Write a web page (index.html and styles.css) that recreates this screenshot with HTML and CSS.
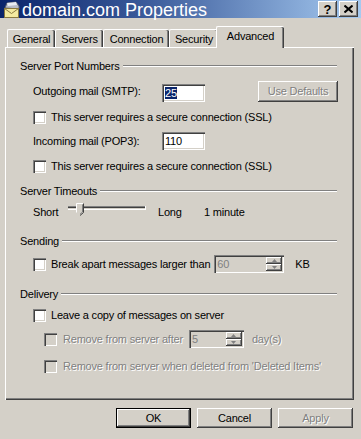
FILE: index.html
```html
<!DOCTYPE html>
<html>
<head>
<meta charset="utf-8">
<link rel="stylesheet" href="styles.css">
</head>
<body>
<div class="window">
  <div class="titlebar">
    <svg class="appicon" width="19" height="17" viewBox="0 0 19 17">
      <path d="M3 7 L5 2 L14 1 L17 5 L17 8 Z" fill="#b8bcc8" stroke="#5a6070" stroke-width="1"/>
      <path d="M5 2 L14 1 L15 4 L6 5 Z" fill="#e8ecf4"/>
      <rect x="2.5" y="7.5" width="14" height="9" fill="#f4eaa0" stroke="#8a7a40"/>
      <path d="M2.5 7.5 L9.5 12.5 L16.5 7.5" fill="none" stroke="#8a7a40"/>
    </svg>
    <span class="title">domain.com Properties</span>
    <div class="tb-buttons">
      <span class="tb-btn tb-help">?</span>
      <span class="tb-btn">
        <svg width="9" height="8" viewBox="0 0 9 8"><path d="M0.5 0.5 L8.5 7.5 M8.5 0.5 L0.5 7.5" stroke="#000" stroke-width="2"/></svg>
      </span>
    </div>
  </div>

  <div class="tabs">
    <div class="tab tab-general">General</div>
    <div class="tab tab-servers">Servers</div>
    <div class="tab tab-connection">Connection</div>
    <div class="tab tab-security">Security</div>
    <div class="tab tab-advanced selected">Advanced</div>
  </div>

  <div class="panel">
    <div class="group-head"><span>Server Port Numbers</span><i class="etch"></i></div>

    <div class="row row-outgoing">
      <span class="lbl-port">Outgoing mail (SMTP):</span>
      <span class="field"><span class="sel">25</span></span>
      <span class="btn btn-defaults disabled">Use Defaults</span>
    </div>
    <div class="row row-cb1">
      <span class="cb"></span><span>This server requires a secure connection (SSL)</span>
    </div>
    <div class="row row-incoming">
      <span class="lbl-port">Incoming mail (POP3):</span>
      <span class="field">110</span>
    </div>
    <div class="row row-cb2">
      <span class="cb"></span><span>This server requires a secure connection (SSL)</span>
    </div>

    <div class="group-head head-timeouts"><span>Server Timeouts</span><i class="etch"></i></div>
    <div class="row row-slider">
      <span class="lbl-short">Short</span>
      <svg class="slider" width="80" height="16" viewBox="0 0 80 16">
        <rect x="0" y="3" width="78" height="1" fill="#808080"/>
        <rect x="0" y="4" width="77" height="1" fill="#404040"/>
        <rect x="0" y="6" width="78" height="1" fill="#ffffff"/>
        <rect x="77" y="3" width="1" height="4" fill="#ffffff"/>
        <path d="M8.5 0.5 H15.5 V9.5 L12 12.5 L8.5 9.5 Z" fill="#d4d0c8"/>
        <path d="M8.5 9.5 V0.5 H15.5" fill="none" stroke="#ffffff"/>
        <path d="M15.5 0.5 V9.5 L12 12.5" fill="none" stroke="#404040"/>
        <path d="M14.5 1.5 V9 L12 11.2" fill="none" stroke="#808080"/>
      </svg>
      <span class="lbl-long">Long</span>
      <span>1 minute</span>
    </div>

    <div class="group-head head-sending"><span>Sending</span><i class="etch"></i></div>
    <div class="row row-sending">
      <span class="cb"></span><span>Break apart messages larger than</span>
      <span class="spin spin-kb">
        <span class="spin-val">60</span>
        <span class="spin-btns">
          <span class="spin-btn"><svg width="5" height="3" viewBox="0 0 5 3"><path d="M2.5 0 L5 3 H0 Z" fill="#808080"/></svg></span>
          <span class="spin-btn"><svg width="5" height="3" viewBox="0 0 5 3"><path d="M0 0 H5 L2.5 3 Z" fill="#808080"/></svg></span>
        </span>
      </span>
      <span class="lbl-kb">KB</span>
    </div>

    <div class="group-head head-delivery"><span>Delivery</span><i class="etch"></i></div>
    <div class="row row-leave">
      <span class="cb"></span><span>Leave a copy of messages on server</span>
    </div>
    <div class="row row-after">
      <span class="cb disabled-cb"></span><span class="dis">Remove from server after</span>
      <span class="spin spin-days">
        <span class="spin-val">5</span>
        <span class="spin-btns">
          <span class="spin-btn"><svg width="5" height="3" viewBox="0 0 5 3"><path d="M2.5 0 L5 3 H0 Z" fill="#808080"/></svg></span>
          <span class="spin-btn"><svg width="5" height="3" viewBox="0 0 5 3"><path d="M0 0 H5 L2.5 3 Z" fill="#808080"/></svg></span>
        </span>
      </span>
      <span class="dis lbl-days">day(s)</span>
    </div>
    <div class="row row-deleted">
      <span class="cb disabled-cb"></span><span class="dis">Remove from server when deleted from 'Deleted Items'</span>
    </div>
  </div>

  <div class="buttons">
    <span class="btn btn-main btn-default">OK</span>
    <span class="btn btn-main">Cancel</span>
    <span class="btn btn-main disabled">Apply</span>
  </div>
</div>
</body>
</html>
```
FILE: styles.css
```css
html, body {
  margin: 0;
  padding: 0;
  background: #d4d0c8;
}
body {
  font-family: "Liberation Sans", Arial, sans-serif;
  font-size: 11px;
  letter-spacing: -0.2px;
  color: #000;
}
.window {
  width: 361px;
  height: 439px;
  display: flex;
  flex-direction: column;
  overflow: hidden;
}

/* title bar */
.titlebar {
  height: 18px;
  background: linear-gradient(to right, #0a246a 0%, #3a5a9a 40%, #a6caf0 100%);
  display: flex;
  align-items: center;
  padding: 0 3px 0 2px;
}
.appicon { flex: none; }
.title {
  flex: 1;
  color: #fff;
  font-size: 18px;
  letter-spacing: 0;
  line-height: 18px;
  margin-left: 1px;
  margin-top: 1px;
  white-space: nowrap;
}
.tb-buttons {
  display: flex;
  gap: 2px;
  align-self: flex-start;
  margin-top: 1px;
}
.tb-btn {
  width: 19px;
  height: 16px;
  background: #d4d0c8;
  box-shadow: inset -1px -1px #404040, inset 1px 1px #fff, inset -2px -2px #808080;
  display: flex;
  align-items: center;
  justify-content: center;
  font-weight: bold;
  font-size: 13px;
  letter-spacing: 0;
}

/* tabs */
.tabs {
  display: flex;
  align-items: flex-end;
  height: 22px;
  margin-top: 7px;
  padding-left: 7px;
}
.tab {
  height: 18px;
  box-sizing: border-box;
  border-top: 1px solid #fff;
  border-left: 1px solid #fff;
  border-radius: 2px 2px 0 0;
  box-shadow: inset -1px 0 #404040, inset -2px 0 #808080;
  background: #d4d0c8;
  display: flex;
  align-items: center;
  justify-content: center;
  padding-top: 1px;
}
.tab-general { width: 48px; }
.tab-servers { width: 48px; }
.tab-connection { width: 66px; }
.tab-security { width: 49px; }
.tab-advanced { width: 64px; }
.tab.selected {
  height: 22px;
  width: 68px;
  margin-left: -2px;
  margin-bottom: -1px;
  position: relative;
  z-index: 1;
  padding-top: 0;
  padding-bottom: 3px;
}

/* panel */
.panel {
  height: 353px;
  box-sizing: border-box;
  margin: 0 7px 0 5px;
  padding: 12px 17px 0 15px;
  box-shadow: inset 1px 1px #fff, inset -1px -1px #404040, inset -2px -2px #808080;
  display: flex;
  flex-direction: column;
}
.group-head {
  height: 14px;
  display: flex;
  align-items: center;
  white-space: nowrap;
}
.etch {
  flex: 1;
  height: 0;
  border-top: 1px solid #808080;
  border-bottom: 1px solid #fff;
  margin-left: 3px;
  margin-top: -1px;
}
.head-timeouts { margin-top: 10px; }
.head-sending { margin-top: 14px; }
.head-delivery { margin-top: 14px; }

.row {
  display: flex;
  align-items: center;
  margin-left: 13px;
  white-space: nowrap;
}
.row-outgoing { height: 22px; margin-top: 7px; }
.row-cb1 { height: 16px; margin-top: 7px; }
.row-incoming { height: 18px; margin-top: 7px; }
.row-cb2 { height: 16px; margin-top: 8px; }
.row-slider { height: 16px; margin-top: 6px; }
.row-sending { height: 18px; margin-top: 7px; }
.row-leave { height: 16px; margin-top: 6px; }
.row-after { height: 18px; margin-top: 7px; margin-left: 24px; }
.row-deleted { height: 16px; margin-top: 10px; margin-left: 24px; }

.lbl-port { width: 129px; }
.field {
  width: 43px;
  height: 18px;
  box-sizing: border-box;
  background: #fff;
  box-shadow: inset 1px 1px #808080, inset 2px 2px #404040, inset -1px -1px #fff, inset -2px -2px #d4d0c8;
  padding: 2px 0 0 3px;
  line-height: 14px;
}
.row-outgoing .field { margin-top: 3px; }
.sel {
  background: #0a246a;
  color: #fff;
}

.cb {
  width: 13px;
  height: 13px;
  flex: none;
  background: #fff;
  box-shadow: inset 1px 1px #808080, inset 2px 2px #404040, inset -1px -1px #fff, inset -2px -2px #d4d0c8;
  margin-right: 5px;
}
.cb.disabled-cb { background: #d4d0c8; margin-right: 6px; }

.dis {
  color: #808080;
  text-shadow: 1px 1px #fff;
}

.lbl-short { width: 35px; }
.slider { flex: none; margin-top: -2px; }
.lbl-long { width: 46px; margin-left: 10px; }

.spin {
  display: flex;
  align-items: stretch;
  height: 18px;
  box-sizing: border-box;
  padding: 2px;
  background: #d4d0c8;
  box-shadow: inset 1px 1px #808080, inset 2px 2px #404040, inset -1px -1px #fff, inset -2px -2px #d4d0c8;
}
.spin-kb { width: 70px; margin-left: 4px; }
.spin-days { width: 55px; margin-left: 6px; }
.spin-val {
  flex: 1;
  color: #808080;
  padding-left: 1px;
  line-height: 14px;
}
.spin-btns {
  display: flex;
  flex-direction: column;
  width: 16px;
}
.spin-btn {
  flex: 1;
  display: flex;
  align-items: center;
  justify-content: center;
  background: #d4d0c8;
  box-shadow: inset -1px -1px #404040, inset 1px 1px #fff, inset -2px -2px #808080;
}
.lbl-kb { margin-left: 11px; }
.lbl-days { margin-left: 8px; }

/* buttons */
.btn {
  box-sizing: border-box;
  display: flex;
  align-items: center;
  justify-content: center;
  background: #d4d0c8;
  box-shadow: inset -1px -1px #404040, inset 1px 1px #fff, inset -2px -2px #808080;
}
.btn.disabled {
  color: #808080;
  text-shadow: 1px 1px #fff;
}
.btn-defaults {
  width: 80px;
  height: 21px;
  margin-left: auto;
  margin-right: -1px;
}
.buttons {
  display: flex;
  justify-content: flex-end;
  gap: 6px;
  margin-top: 8px;
  padding-right: 8px;
}
.btn-main {
  width: 75px;
  height: 20px;
}
.btn-default {
  box-shadow: inset 0 0 0 1px #000, inset -2px -2px #404040, inset 2px 2px #fff, inset -3px -3px #808080;
}
```
